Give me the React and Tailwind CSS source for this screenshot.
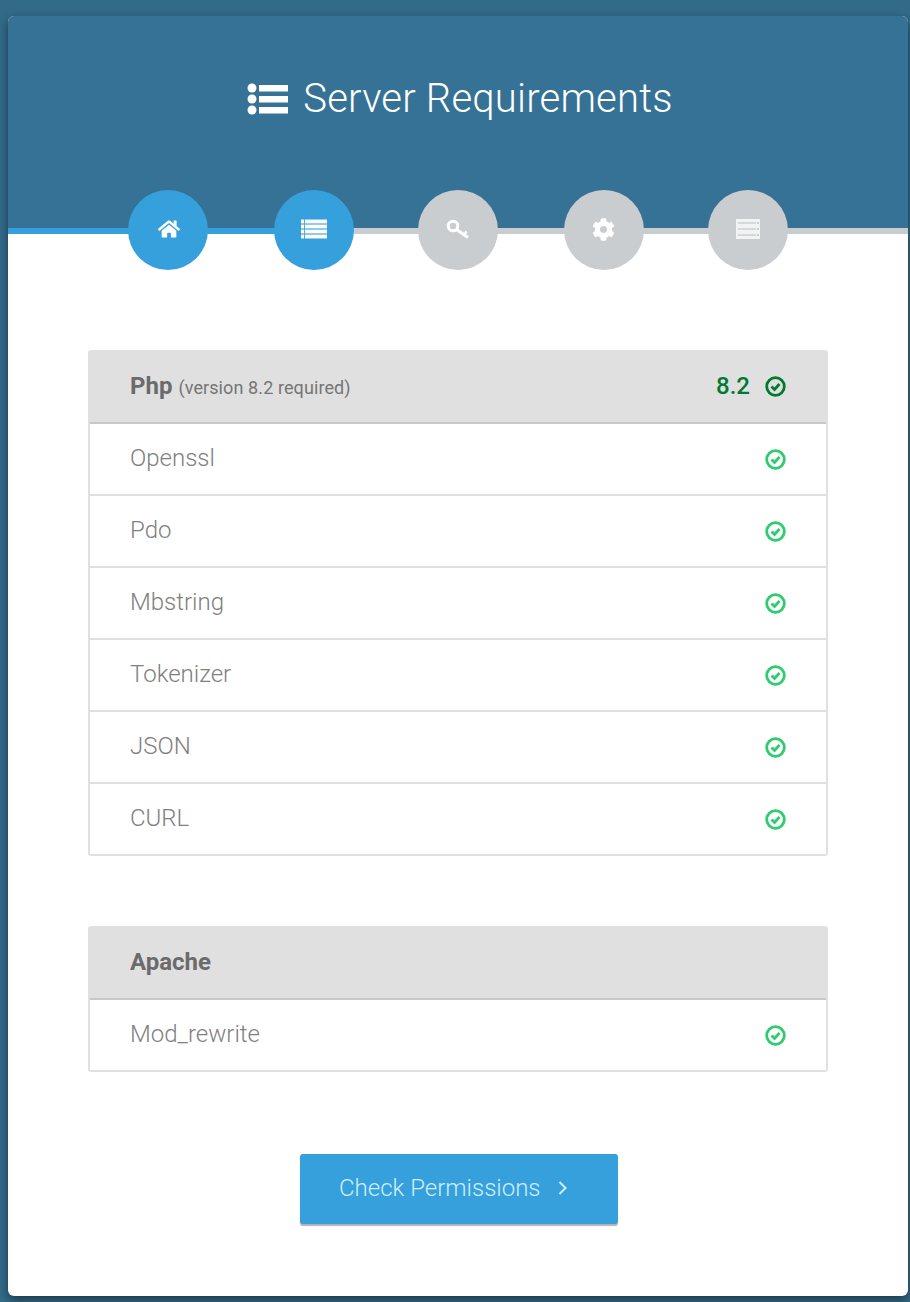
import React from "react"
import { FaHome, FaCog } from "react-icons/fa"

function ListUlIcon() {
  return (
    <svg width="42" height="32" viewBox="0 0 42 32" fill="currentColor">
      <circle cx="5" cy="5" r="4.5" />
      <circle cx="5" cy="16" r="4.5" />
      <circle cx="5" cy="27" r="4.5" />
      <rect x="12" y="2" width="29" height="6.5" />
      <rect x="12" y="13" width="29" height="6.5" />
      <rect x="12" y="24" width="29" height="6.5" />
    </svg>
  )
}

function ListIcon() {
  return (
    <svg className="-translate-y-px" width="26" height="20" viewBox="0 0 26 20" fill="currentColor">
      <rect x="0" y="0" width="26" height="20" opacity="0.45" />
      <rect x="3" y="0" width="1" height="20" fill="#35a0dc" opacity="0.7" />
      <rect x="4" y="1" width="22" height="3" />
      <rect x="4" y="6" width="22" height="3" />
      <rect x="4" y="11" width="22" height="3" />
      <rect x="4" y="16" width="22" height="3" />
      <rect x="0" y="1" width="3" height="3" />
      <rect x="0" y="6" width="3" height="3" />
      <rect x="0" y="11" width="3" height="3" />
      <rect x="0" y="16" width="3" height="3" />
    </svg>
  )
}

function KeyIcon() {
  return (
    <svg className="-translate-y-px" width="24" height="21" viewBox="0 0 24 21" fill="none" stroke="currentColor">
      <circle cx="7" cy="7" r="4.8" strokeWidth="3" />
      <path d="M10.5 10.5 L22 18.5" strokeWidth="3.2" />
      <path d="M18.5 15.5 L20.5 12.5" strokeWidth="2.6" />
    </svg>
  )
}

function ServerIcon() {
  return (
    <svg className="-translate-y-px" width="24" height="20" viewBox="0 0 24 20" fill="currentColor">
      <rect x="0" y="0" width="24" height="20" opacity="0.75" />
      <rect x="2" y="3" width="18" height="2" fill="#c9cdd0" opacity="0.7" />
      <rect x="2" y="9" width="18" height="2" fill="#c9cdd0" opacity="0.7" />
      <rect x="2" y="15" width="18" height="2" fill="#c9cdd0" opacity="0.7" />
      <rect x="21" y="3" width="2" height="2" fill="#c9cdd0" />
      <rect x="21" y="9" width="2" height="2" fill="#c9cdd0" />
      <rect x="21" y="15" width="2" height="2" fill="#c9cdd0" />
    </svg>
  )
}

function CheckIcon() {
  return (
    <svg width="21" height="21" viewBox="0 0 21 21" fill="none" stroke="currentColor" strokeWidth="2.8">
      <circle cx="10.5" cy="10.5" r="8.8" />
      <path d="M6.5 10.6 L9.5 13.5 L14.5 8" />
    </svg>
  )
}

const STEPS = [
  { icon: <FaHome className="translate-x-px -translate-y-px text-[22px]" />, active: true, gap: "" },
  { icon: <ListIcon />, active: true, gap: "ml-[66px]" },
  { icon: <KeyIcon />, active: false, gap: "ml-[64px]" },
  { icon: <FaCog className="-translate-x-px -translate-y-px text-[23px]" />, active: false, gap: "ml-[66px]" },
  { icon: <ServerIcon />, active: false, gap: "ml-[64px]" },
]

const PHP_ROWS = ["Openssl", "Pdo", "Mbstring", "Tokenizer", "JSON", "CURL"]

function Row({ label }) {
  return (
    <div className="flex h-[72px] items-center justify-between border-b-2 border-[#e0e0e0] pl-10 pr-10">
      <span className="relative -top-px text-2xl font-light text-[#808080]">{label}</span>
      <span className="text-[#2ecc71]">
        <CheckIcon />
      </span>
    </div>
  )
}

function Panel({ title, note, version, rows }) {
  return (
    <div className="overflow-hidden rounded-[3px] border-x-2 border-[#e0e0e0]">
      <div className="-mx-0.5 flex h-[74px] items-center justify-between border-b-2 border-[#c8c8c8] bg-[#e0e0e0] pl-[42px] pr-[42px]">
        <div className="flex items-baseline gap-1.5">
          <span className="text-2xl font-bold text-[#6b6b6b]">{title}</span>
          {note && <span className="text-lg tracking-[0.1px] text-[#757575]">{note}</span>}
        </div>
        {version && (
          <div className="flex items-center gap-[15px] text-[#007a33]">
            <span className="text-2xl font-medium">{version}</span>
            <CheckIcon />
          </div>
        )}
      </div>
      {rows.map((r) => (
        <Row key={r} label={r} />
      ))}
    </div>
  )
}

export default function App() {
  return (
    <div className="min-h-[1302px] bg-[#326a88] pb-1.5 pl-2 pr-0.5 pt-4 font-['Roboto',sans-serif]">
      <div className="h-[1280px] overflow-hidden rounded-md bg-white shadow-[0_4px_10px_rgba(0,0,0,0.45)]">
        <div className="flex h-[212px] items-start justify-center bg-[#357295] pl-1 pt-[54px]">
          <h1 className="flex items-center gap-[14px] text-[40px] font-light leading-[58px] tracking-[0.2px] text-white">
            <ListUlIcon />
            Server Requirements
          </h1>
        </div>
        <div className="flex h-1.5">
          <div className="w-[306px] bg-[#35a0dc]" />
          <div className="flex-1 bg-[#c9cdd0]" />
        </div>
        <div className="relative -mt-[44px] flex pl-[120px]">
          {STEPS.map((s, i) => (
            <div
              key={i}
              className={`flex h-20 w-20 items-center justify-center rounded-full text-white ${s.gap} ${
                s.active ? "bg-[#35a0dc]" : "bg-[#c9cdd0]"
              }`}
            >
              {s.icon}
            </div>
          ))}
        </div>
        <div className="flex flex-col gap-[70px] px-20 pt-20">
          <Panel title="Php" note="(version 8.2 required)" version="8.2" rows={PHP_ROWS} />
          <Panel title="Apache" rows={["Mod_rewrite"]} />
        </div>
        <div className="flex justify-center pl-0.5 pt-[82px]">
          <button className="flex h-[70px] w-[318px] items-center gap-[17px] rounded-[3px] bg-[#35a0dc] pb-0.5 pl-[39px] text-2xl font-light text-[#cfeeff] shadow-[0_2px_1px_rgba(0,0,0,0.3)]">
            Check Permissions
            <svg width="9" height="14" viewBox="0 0 9 14" fill="none" stroke="currentColor" strokeWidth="2">
              <path d="M1.5 1 L7.5 7 L1.5 13" />
            </svg>
          </button>
        </div>
      </div>
    </div>
  )
}
